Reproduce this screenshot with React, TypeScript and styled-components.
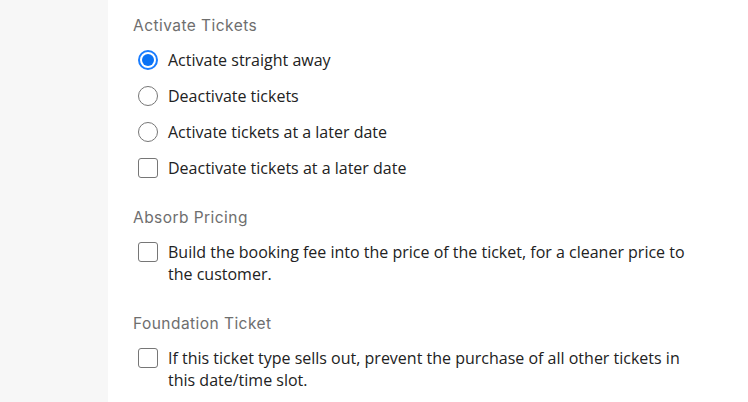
import React, { useState } from 'react'
import styled, { createGlobalStyle } from 'styled-components'

const GlobalStyle = createGlobalStyle`
  html, body {
    margin: 0;
    padding: 0;
    background: #ffffff;
  }
  body {
    font-family: 'Open Sans', 'Noto Sans', sans-serif;
    color: #222;
  }
`

const Page = styled.div`
  display: flex;
  width: 748px;
  height: 402px;
  overflow: hidden;
`

const Sidebar = styled.aside`
  width: 108px;
  flex-shrink: 0;
  background: #f7f7f7;
`

const Main = styled.main`
  flex: 1;
  padding: 16px 20px 0 25px;
  display: flex;
  flex-direction: column;
`

const Section = styled.section`
  display: flex;
  flex-direction: column;
  margin-bottom: 29px;
`

const Heading = styled.h3`
  margin: 0 0 13px;
  font-family: Inter, 'Liberation Sans', sans-serif;
  font-weight: 400;
  font-size: 15.5px;
  letter-spacing: 0.45px;
  line-height: 20px;
  color: #6e6e6e;
`

const Options = styled.div`
  display: flex;
  flex-direction: column;
  gap: 14px;
`

const Option = styled.label`
  display: flex;
  align-items: flex-start;
  gap: 10px;
  padding-left: 5px;
  font-size: 16px;
  line-height: 22px;
  color: #222;
  cursor: pointer;
`

const Text = styled.span`
  max-width: 530px;
`

const Radio = styled.span<{ $checked: boolean }>`
  width: 20px;
  height: 20px;
  margin-top: 1px;
  flex-shrink: 0;
  box-sizing: border-box;
  border-radius: 50%;
  border: ${({ $checked }) => ($checked ? '2px solid #1a7dff' : '1px solid #767676')};
  display: flex;
  align-items: center;
  justify-content: center;

  &::after {
    content: '';
    width: 12px;
    height: 12px;
    border-radius: 50%;
    background: #0a72f5;
    display: ${({ $checked }) => ($checked ? 'block' : 'none')};
  }
`

const Box = styled.span<{ $checked: boolean }>`
  width: 20px;
  height: 20px;
  margin-top: 1px;
  flex-shrink: 0;
  box-sizing: border-box;
  border-radius: 3px;
  border: 1px solid #767676;
  background: ${({ $checked }) => ($checked ? '#0a72f5' : '#fff')};
`

const activation = [
  'Activate straight away',
  'Deactivate tickets',
  'Activate tickets at a later date',
]

export default function App() {
  const [mode, setMode] = useState(0)
  const [later, setLater] = useState(false)
  const [absorb, setAbsorb] = useState(false)
  const [foundation, setFoundation] = useState(false)

  return (
    <>
      <GlobalStyle />
      <Page>
        <Sidebar />
        <Main>
          <Section>
            <Heading>Activate Tickets</Heading>
            <Options>
              {activation.map((label, i) => (
                <Option key={label} onClick={() => setMode(i)}>
                  <Radio $checked={mode === i} />
                  <Text>{label}</Text>
                </Option>
              ))}
              <Option onClick={() => setLater(!later)}>
                <Box $checked={later} />
                <Text>Deactivate tickets at a later date</Text>
              </Option>
            </Options>
          </Section>

          <Section>
            <Heading>Absorb Pricing</Heading>
            <Options>
              <Option onClick={() => setAbsorb(!absorb)}>
                <Box $checked={absorb} />
                <Text>
                  Build the booking fee into the price of the ticket, for a cleaner price to
                  the customer.
                </Text>
              </Option>
            </Options>
          </Section>

          <Section>
            <Heading>Foundation Ticket</Heading>
            <Options>
              <Option onClick={() => setFoundation(!foundation)}>
                <Box $checked={foundation} />
                <Text>
                  If this ticket type sells out, prevent the purchase of all other tickets in
                  this date/time slot.
                </Text>
              </Option>
            </Options>
          </Section>
        </Main>
      </Page>
    </>
  )
}
